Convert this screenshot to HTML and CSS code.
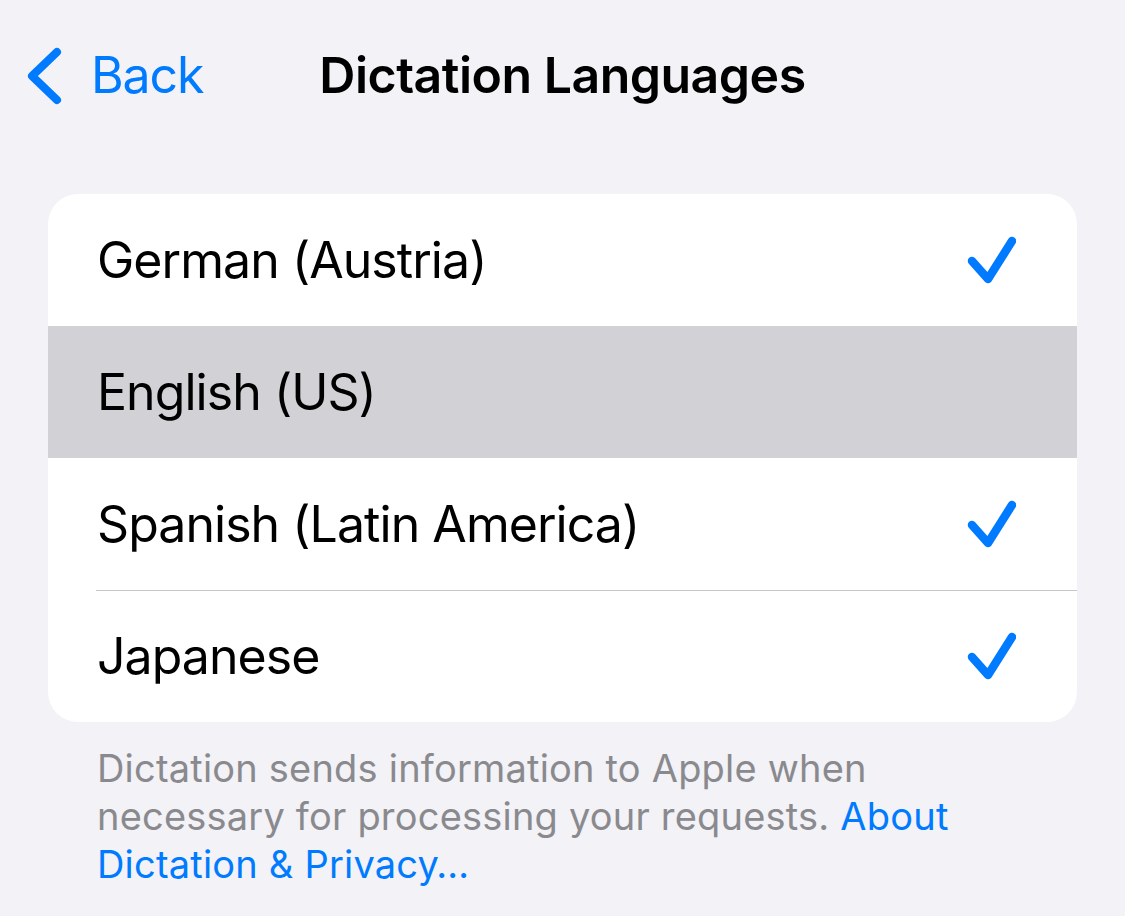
FILE: index.html
```html
<!DOCTYPE html>
<html lang="en">
<head>
  <meta charset="UTF-8" />
  <meta name="viewport" content="width=device-width, initial-scale=1" />
  <title>Dictation Languages</title>
  <link rel="stylesheet" href="styles.css">
</head>
<body>

  <header class="navbar">
    <a class="back" href="#">
      <svg class="chevron" viewBox="0 0 40 60" width="40" height="60">
        <polyline points="33,7 8,31 33,55" />
      </svg>
      <span>Back</span>
    </a>
    <h1 class="title">Dictation Languages</h1>
    <div></div>
  </header>

  <ul class="list">
    <li class="row">
      <span>German (Austria)</span>
      <svg class="check" viewBox="0 0 50 50" width="50" height="50">
        <polyline points="6,26 22,44 46,6" />
      </svg>
    </li>
    <li class="row active">
      <span>English (US)</span>
    </li>
    <li class="row">
      <span>Spanish (Latin America)</span>
      <svg class="check" viewBox="0 0 50 50" width="50" height="50">
        <polyline points="6,26 22,44 46,6" />
      </svg>
    </li>
    <li class="row divided">
      <span>Japanese</span>
      <svg class="check" viewBox="0 0 50 50" width="50" height="50">
        <polyline points="6,26 22,44 46,6" />
      </svg>
    </li>
  </ul>

  <p class="footnote">
    Dictation sends information to Apple when necessary for processing your requests.
    <a href="#">About Dictation &amp; Privacy…</a>
  </p>

</body>
</html>
```

FILE: styles.css
```css
* { box-sizing: border-box; }

body {
  margin: 0;
  background-color: #f2f2f7;
  font-family: Inter, 'Noto Sans', sans-serif;
  color: #000;
}

.navbar {
  display: grid;
  grid-template-columns: 1fr auto 1fr;
  align-items: center;
  height: 150px;
  padding: 0 24px;
}

.back {
  display: flex;
  align-items: center;
  gap: 27px;
  color: #007aff;
  text-decoration: none;
  font-size: 50px;
  letter-spacing: -1.1px;
}

.chevron polyline,
.check polyline {
  fill: none;
  stroke: #007aff;
  stroke-linecap: round;
  stroke-linejoin: round;
}

.chevron polyline { stroke-width: 8; }
.check polyline { stroke-width: 8.5; }

.title {
  margin: 0;
  font-size: 50px;
  font-weight: 600;
  letter-spacing: -0.5px;
}

.list {
  list-style: none;
  margin: 44px 48px 0;
  padding: 0;
  background-color: white;
  border-radius: 30px;
  overflow: hidden;
}

.row {
  position: relative;
  display: flex;
  align-items: center;
  justify-content: space-between;
  height: 132px;
  padding: 0 61px 0 49px;
  font-size: 50px;
  letter-spacing: -0.95px;
}

.row.active {
  background-color: #d1d1d6;
}

.row.divided::before {
  content: '';
  position: absolute;
  top: 0;
  left: 48px;
  right: 0;
  height: 1px;
  background-color: #c6c6c8;
}

.footnote {
  margin: 22px 0 0;
  padding: 0 97px;
  font-size: 38px;
  line-height: 48px;
  color: #8a8a8e;
  letter-spacing: 0.2px;
}

.footnote a {
  color: #007aff;
  text-decoration: none;
}
```
